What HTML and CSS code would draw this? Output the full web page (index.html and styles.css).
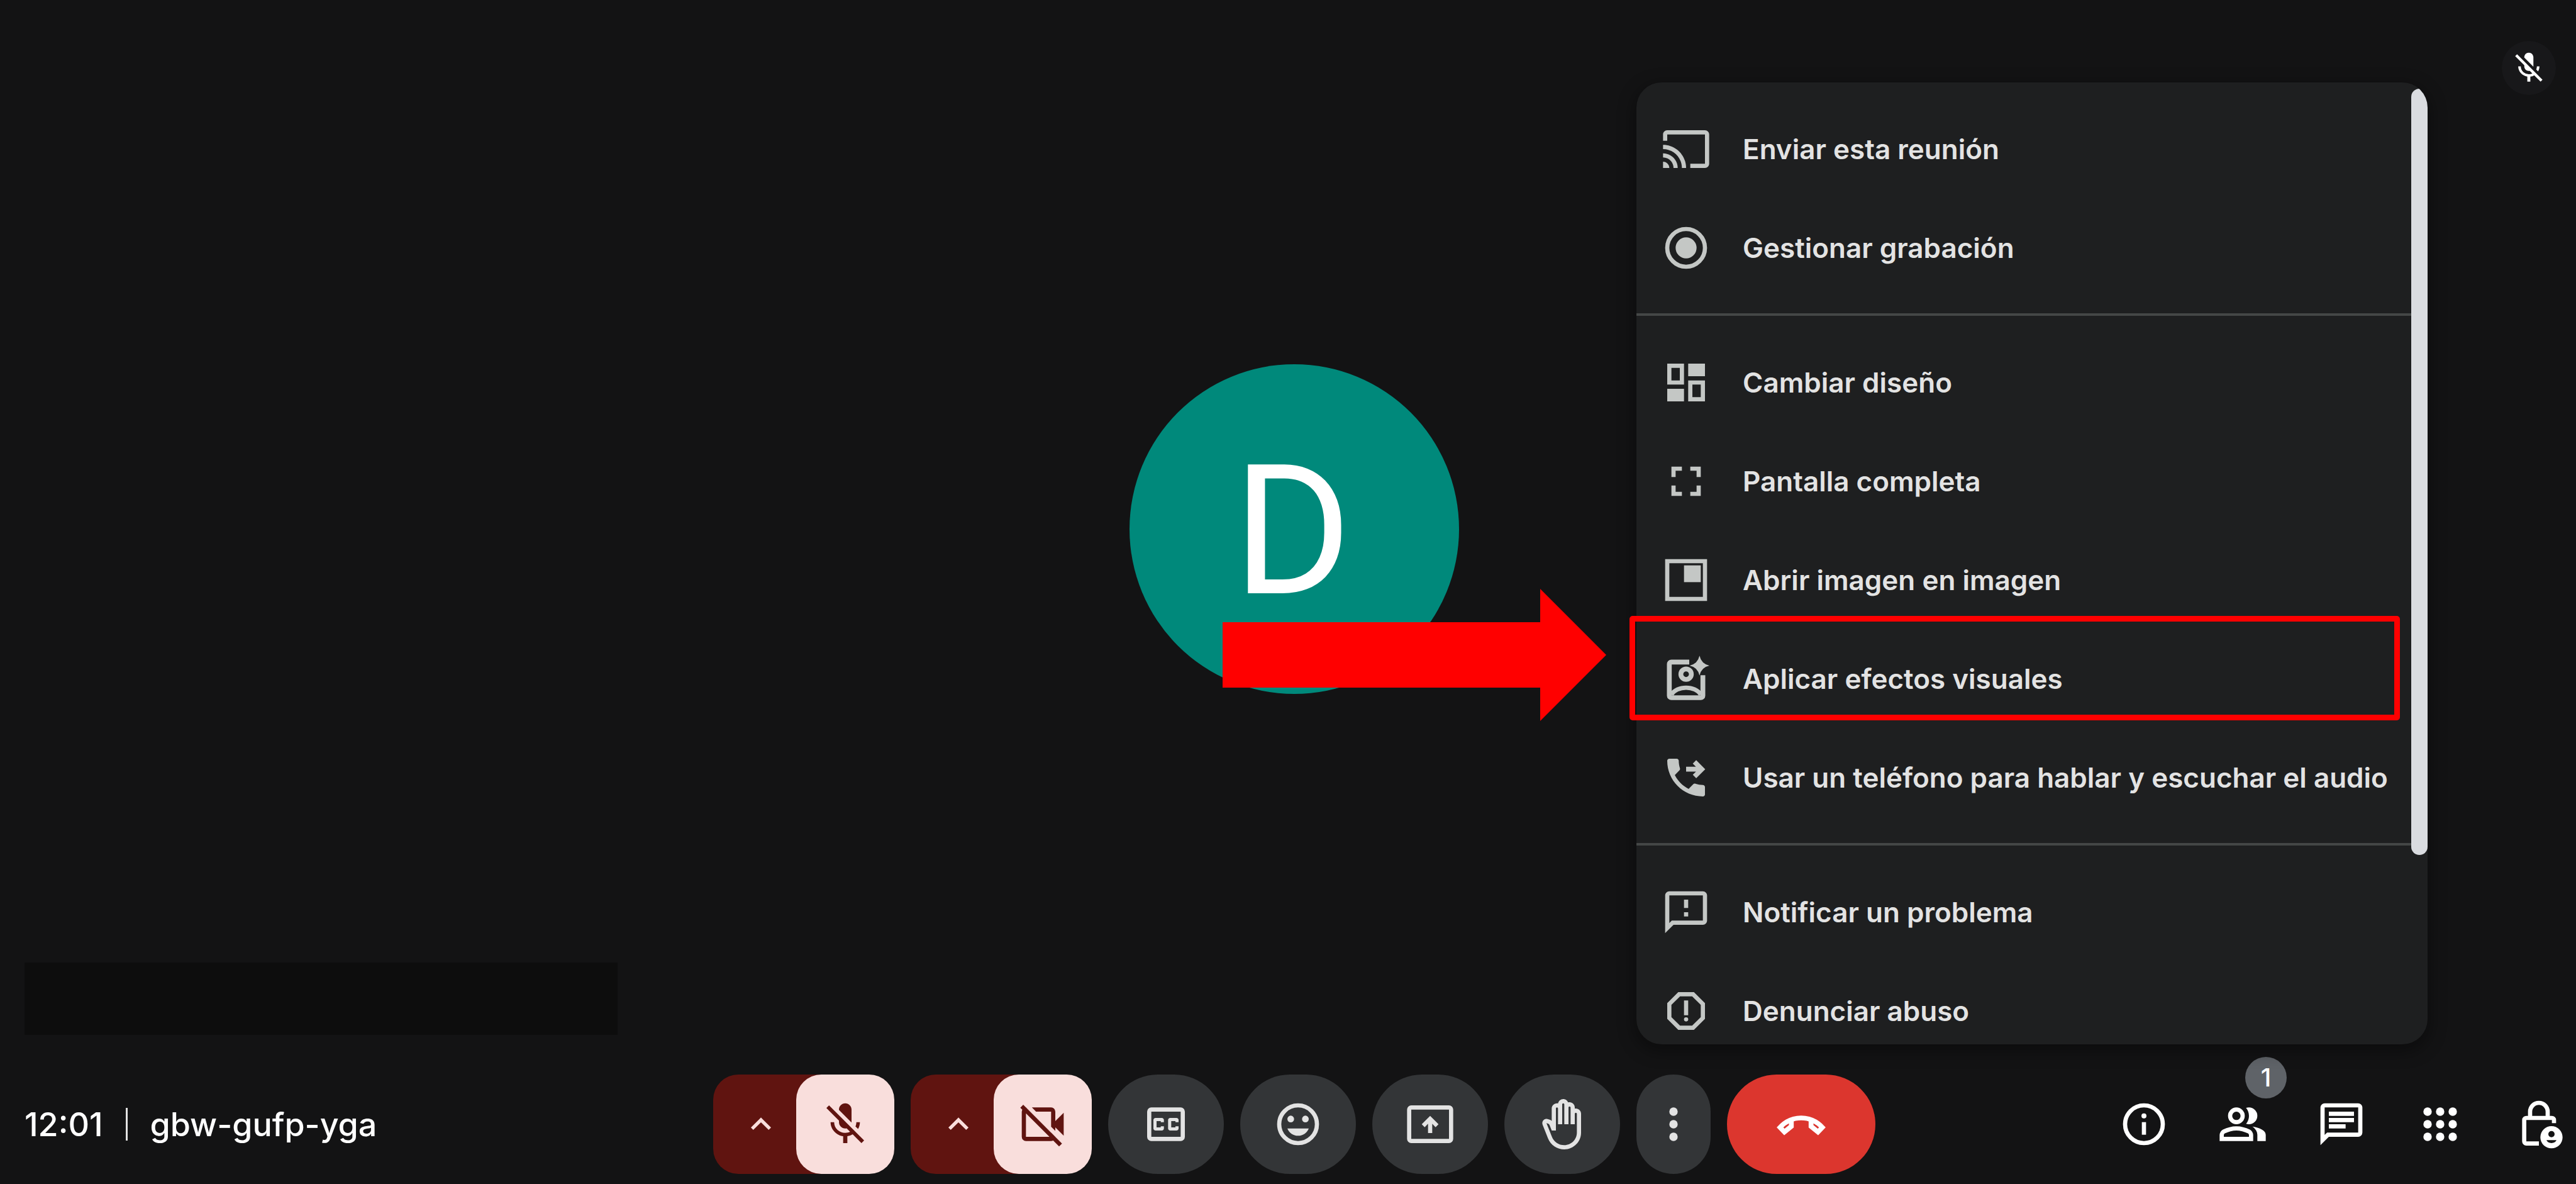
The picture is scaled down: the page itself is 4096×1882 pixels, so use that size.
FILE: index.html
```html
<!DOCTYPE html>
<html lang="es">
<head>
<meta charset="utf-8">
<title>gbw-gufp-yga</title>
<link rel="stylesheet" href="styles.css">
</head>
<body>
<main class="stage">
  <div class="stage-top">
    <span class="muted-pill"><svg class="icon-small" viewBox="0 0 24 24" aria-hidden="true"><path d="M19 11h-1.7c0 .74-.16 1.43-.43 2.05l1.23 1.23c.56-.98.9-2.09.9-3.28zm-4.02.17c0-.06.02-.11.02-.17V5c0-1.66-1.34-3-3-3S9 3.34 9 5v.18l5.98 5.99zM4.27 3L3 4.27l6.01 6.01V11c0 1.66 1.33 3 2.99 3 .22 0 .44-.03.65-.08l1.66 1.66c-.71.33-1.5.52-2.31.52-2.76 0-5.3-2.1-5.3-5.1H5c0 3.41 2.72 6.23 6 6.72V21h2v-3.28c.91-.13 1.77-.45 2.54-.9L19.73 21 21 19.73 4.27 3z"/></svg></span>
  </div>
  <div class="avatar">D</div>
  <div class="name-cover"></div>
</main>

<footer class="bar">
  <div class="meeting">
    <span>12:01</span>
    <span class="separator"></span>
    <span>gbw-gufp-yga</span>
  </div>

  <div class="controls">
    <div class="split">
      <button class="expand" type="button" aria-label="Ajustes de audio"><svg class="icon-chevron" viewBox="0 0 24 24"><path d="M12 8l-6 6 1.41 1.41L12 10.83l4.59 4.58L18 14z"/></svg></button>
      <button class="toggle" type="button" aria-label="Activar micrófono"><svg class="icon" viewBox="0 0 24 24"><path d="M19 11h-1.7c0 .74-.16 1.43-.43 2.05l1.23 1.23c.56-.98.9-2.09.9-3.28zm-4.02.17c0-.06.02-.11.02-.17V5c0-1.66-1.34-3-3-3S9 3.34 9 5v.18l5.98 5.99zM4.27 3L3 4.27l6.01 6.01V11c0 1.66 1.33 3 2.99 3 .22 0 .44-.03.65-.08l1.66 1.66c-.71.33-1.5.52-2.31.52-2.76 0-5.3-2.1-5.3-5.1H5c0 3.41 2.72 6.23 6 6.72V21h2v-3.28c.91-.13 1.77-.45 2.54-.9L19.73 21 21 19.73 4.27 3z"/></svg></button>
    </div>
    <div class="split">
      <button class="expand" type="button" aria-label="Ajustes de vídeo"><svg class="icon-chevron" viewBox="0 0 24 24"><path d="M12 8l-6 6 1.41 1.41L12 10.83l4.59 4.58L18 14z"/></svg></button>
      <button class="toggle" type="button" aria-label="Activar cámara"><svg class="icon" viewBox="0 -960 960 960"><path d="M880-260 720-420v67l-80-80v-287H353l-80-80h367q33 0 56.5 23.5T720-720v180l160-160v440ZM792-56 52-796l56-56L848-112l-56 56ZM160-800l80 80h-80v480h480v-80l80 80q0 33-23.5 56.5T640-160H160q-33 0-56.5-23.5T80-240v-480q0-33 23.5-56.5T160-800Z"/></svg></button>
    </div>
    <button class="round" type="button" aria-label="Subtítulos"><svg class="icon" viewBox="0 -960 960 960"><path d="M200-160q-33 0-56.5-23.5T120-240v-480q0-33 23.5-56.5T200-800h560q33 0 56.5 23.5T840-720v480q0 33-23.5 56.5T760-160H200Zm0-80h560v-480H200v480Zm80-120h120q17 0 28.5-11.5T440-400v-40h-60v20h-80v-120h80v20h60v-40q0-17-11.5-28.5T400-600H280q-17 0-28.5 11.5T240-560v160q0 17 11.5 28.5T280-360Zm400-240H560q-17 0-28.5 11.5T520-560v160q0 17 11.5 28.5T560-360h120q17 0 28.5-11.5T720-400v-40h-60v20h-80v-120h80v20h60v-40q0-17-11.5-28.5T680-600Z"/></svg></button>
    <button class="round" type="button" aria-label="Reacciones"><svg class="icon" viewBox="0 0 24 24"><circle class="line" cx="12" cy="12" r="9"/><circle cx="8.5" cy="9.5" r="1.6"/><circle cx="15.5" cy="9.5" r="1.6"/><path d="M6.9 14h10.2c-.8 2.04-2.78 3.5-5.1 3.5s-4.3-1.46-5.1-3.5z"/></svg></button>
    <button class="round" type="button" aria-label="Presentar ahora"><svg class="icon" viewBox="0 0 24 24"><rect class="line" x="2" y="4" width="20" height="16" rx="1"/><path d="M11 16.2v-4.4l-1.6 1.6L8 12l4-4 4 4-1.4 1.4-1.6-1.6v4.4z"/></svg></button>
    <button class="round" type="button" aria-label="Levantar la mano"><svg class="icon" viewBox="0 0 24 24"><path d="M21 7c0-1.38-1.12-2.5-2.5-2.5-.17 0-.34.02-.5.05V4c0-1.38-1.12-2.5-2.5-2.5-.23 0-.46.03-.67.09C14.46.66 13.56 0 12.5 0c-1.23 0-2.25.89-2.46 2.06C9.87 2.02 9.69 2 9.5 2 8.12 2 7 3.12 7 4.5v5.89c-.34-.31-.76-.54-1.22-.66L5.01 9.52c-.83-.23-1.7.09-2.19.83-.38.57-.4 1.31-.15 1.95l2.56 6.43C6.49 21.91 9.57 24 13 24c4.42 0 8-3.58 8-8V7zm-2 9c0 3.31-2.69 6-6 6-2.61 0-4.95-1.59-5.91-4.01L4.5 11.5l.53.14c.46.12.83.46 1 .9L7 15h2V4.5c0-.28.22-.5.5-.5s.5.22.5.5V12h2V2.5c0-.28.22-.5.5-.5s.5.22.5.5V12h2V4c0-.28.22-.5.5-.5s.5.22.5.5v8h2V7c0-.28.22-.5.5-.5s.5.22.5.5v9z"/></svg></button>
    <button class="round narrow" type="button" aria-label="Más opciones"><svg class="icon" viewBox="0 0 24 24"><circle cx="12" cy="6" r="2"/><circle cx="12" cy="12" r="2"/><circle cx="12" cy="18" r="2"/></svg></button>
    <button class="round hangup" type="button" aria-label="Salir de la llamada"><svg class="icon" viewBox="0 0 24 24"><path class="line heavy" d="M7.3 10.2V13L4 15.7 1.9 13.5C7.5 7.5 16.5 7.5 22.1 13.5L20 15.7 16.7 13v-2.8"/></svg></button>
  </div>

  <div class="panels">
    <button class="panel" type="button" aria-label="Detalles de la reunión"><svg class="icon" viewBox="0 0 24 24"><circle class="line" cx="12" cy="12" r="9"/><circle cx="12" cy="8" r="1.2"/><path d="M11 11h2v6h-2z"/></svg></button>
    <button class="panel" type="button" aria-label="Participantes"><svg class="icon" viewBox="0 -960 960 960"><path d="M40-160v-112q0-34 17.5-62.5T104-378q62-31 126-46.5T360-440q66 0 130 15.5T616-378q29 15 46.5 43.5T680-272v112H40Zm720 0v-120q0-44-24.5-84.5T666-434q51 6 96 20.5t84 35.5q36 20 55 44.5t19 53.5v120H760ZM360-480q-66 0-113-47t-47-113q0-66 47-113t113-47q66 0 113 47t47 113q0 66-47 113t-113 47Zm400-160q0 66-47 113t-113 47q-11 0-28-2.5t-28-5.5q27-32 41.5-71t14.5-81q0-42-14.5-81T544-792q14-5 28-6.5t28-1.5q66 0 113 47t47 113ZM120-240h480v-32q0-11-5.5-20T580-306q-54-27-109-40.5T360-360q-56 0-111 13.5T140-306q-9 5-14.5 14t-5.5 20v32Zm240-320q33 0 56.5-23.5T440-640q0-33-23.5-56.5T360-720q-33 0-56.5 23.5T280-640q0 33 23.5 56.5T360-560Z"/></svg><span class="badge">1</span></button>
    <button class="panel" type="button" aria-label="Chat"><svg class="icon" viewBox="0 -960 960 960"><path d="M240-400h320v-80H240v80Zm0-120h480v-80H240v80Zm0-120h480v-80H240v80ZM80-80v-720q0-33 23.5-56.5T160-880h640q33 0 56.5 23.5T880-800v480q0 33-23.5 56.5T800-240H240L80-80Zm126-240h594v-480H160v525l46-45Z"/></svg></button>
    <button class="panel" type="button" aria-label="Actividades"><svg class="icon" viewBox="0 0 24 24"><circle cx="6" cy="6" r="2"/><circle cx="12" cy="6" r="2"/><circle cx="18" cy="6" r="2"/><circle cx="6" cy="12" r="2"/><circle cx="12" cy="12" r="2"/><circle cx="18" cy="12" r="2"/><circle cx="6" cy="18" r="2"/><circle cx="12" cy="18" r="2"/><circle cx="18" cy="18" r="2"/></svg></button>
    <button class="panel edge" type="button" aria-label="Controles del organizador"><svg class="icon" viewBox="0 0 24 24"><path class="line" d="M7.8 9V6a4.2 4.2 0 0 1 8.4 0v3M19.2 11.5V10a1 1 0 0 0-1-1H6a1 1 0 0 0-1 1v10.2a1 1 0 0 0 1 1h6"/><path fill-rule="evenodd" d="M18 12.9a5.3 5.3 0 1 0 0 10.6 5.3 5.3 0 0 0 0-10.6zm0 2.3a1.5 1.5 0 1 1 0 3 1.5 1.5 0 0 1 0-3zm-2.4 4.4h4.8c-.4.9-1.3 1.4-2.4 1.4s-2-.5-2.4-1.4z"/></svg></button>
  </div>
</footer>

<div class="menu">
  <div class="menu-list" role="menu">
    <button class="item" role="menuitem" type="button"><svg class="icon" viewBox="0 0 24 24"><path d="M21 3H3c-1.1 0-2 .9-2 2v3h2V5h18v14h-7v2h7c1.1 0 2-.9 2-2V5c0-1.1-.9-2-2-2zM1 18v3h3c0-1.66-1.34-3-3-3zm0-4v2c2.76 0 5 2.24 5 5h2c0-3.87-3.13-7-7-7zm0-4v2c4.97 0 9 4.03 9 9h2c0-6.08-4.93-11-11-11z"/></svg>Enviar esta reunión</button>
    <button class="item" role="menuitem" type="button"><svg class="icon" viewBox="0 0 24 24"><circle class="line" cx="12" cy="12" r="9"/><circle cx="12" cy="12" r="5"/></svg>Gestionar grabación</button>
    <hr>
    <button class="item" role="menuitem" type="button"><svg class="icon" viewBox="0 0 24 24"><path d="M13 3h8v6h-8zM3 15h8v6H3z"/><path class="line" d="M4 4h6v8H4zM14 12h6v8h-6z"/></svg>Cambiar diseño</button>
    <button class="item" role="menuitem" type="button"><svg class="icon" viewBox="0 0 24 24"><path d="M7 14H5v5h5v-2H7v-3zm-2-4h2V7h3V5H5v5zm12 7h-3v2h5v-5h-2v3zM14 5v2h3v3h2V5h-5z"/></svg>Pantalla completa</button>
    <button class="item" role="menuitem" type="button"><svg class="icon" viewBox="0 0 24 24"><path class="line" d="M3 3h18v18H3z"/><path d="M11 5h8v8h-8z"/></svg>Abrir imagen en imagen</button>
    <button class="item" role="menuitem" type="button"><svg class="icon" viewBox="0 0 24 24"><path class="line heavy" d="M13.5 4H5a1 1 0 0 0-1 1v15a1 1 0 0 0 1 1h14a1 1 0 0 0 1-1v-9.7"/><circle class="line heavy" cx="12" cy="9.8" r="2.5"/><path class="line" d="M5 19.6C7.5 15.1 16.5 15.1 19 19.6"/><path d="M18.4 1q.9 3.9 4.7 4.7-3.8.8-4.7 4.7-.9-3.9-4.7-4.7 3.8-.8 4.7-4.7z"/></svg>Aplicar efectos visuales</button>
    <button class="item" role="menuitem" type="button"><svg class="icon" viewBox="0 0 24 24"><path d="M20 15.5c-1.25 0-2.45-.2-3.57-.57-.35-.11-.74-.03-1.02.24l-2.2 2.2c-2.83-1.44-5.15-3.75-6.59-6.59l2.2-2.21c.28-.26.36-.65.25-1C8.7 6.45 8.5 5.25 8.5 4c0-.55-.45-1-1-1H4c-.55 0-1 .45-1 1 0 9.39 7.61 17 17 17 .55 0 1-.45 1-1v-3.5c0-.55-.45-1-1-1z"/><path class="line heavy" d="M12 8h7.5M16 4.5 19.5 8 16 11.5"/></svg>Usar un teléfono para hablar y escuchar el audio</button>
    <hr>
    <button class="item" role="menuitem" type="button"><svg class="icon" viewBox="0 0 24 24"><path d="M20 2H4c-1.1 0-1.99.9-1.99 2L2 22l4-4h14c1.1 0 2-.9 2-2V4c0-1.1-.9-2-2-2zm0 14H5.17l-.59.59-.58.58V4h16v12zm-9-4h2v2h-2zm0-6h2v4h-2z"/></svg>Notificar un problema</button>
    <button class="item" role="menuitem" type="button"><svg class="icon" viewBox="0 0 24 24"><path d="M15.73 3H8.27L3 8.27v7.46L8.27 21h7.46L21 15.73V8.27L15.73 3zM19 14.9L14.9 19H9.1L5 14.9V9.1L9.1 5h5.8L19 9.1v5.8zM11 7h2v7h-2z"/><circle cx="12" cy="16" r="1"/></svg>Denunciar abuso</button>
  </div>
  <div class="scroll-thumb"></div>
</div>

<svg class="arrow" viewBox="0 0 610 210" aria-hidden="true"><path d="M0 53h505V0l105 105-105 105v-53H0z"/></svg>
<div class="highlight"></div>
</body>
</html>
```
FILE: styles.css
```css
* { box-sizing: border-box; }

body {
  position: relative;
  display: flex;
  flex-direction: column;
  min-height: 100vh;
  margin: 0;
  padding-left: 20px;
  overflow: hidden;
  background: #131314;
  color: #fff;
  font-family: Inter, "Liberation Sans", sans-serif;
  font-weight: 500;
}

button {
  display: flex;
  align-items: center;
  justify-content: center;
  margin: 0;
  padding: 0;
  border: 0;
  background: none;
  color: inherit;
  font: inherit;
}

svg { fill: currentColor; }
.line { fill: none; stroke: currentColor; stroke-width: 2; }
.heavy { stroke-width: 2.3; }
.icon { flex: none; width: 80px; height: 80px; }
.icon-small { width: 58px; height: 58px; }
.icon-chevron { width: 64px; height: 64px; }

/* Stage */
.stage {
  flex: 1;
  display: grid;
  grid-template-rows: 1fr auto 1fr;
  padding: 37px 19px 47px;
}
.stage-top {
  display: flex;
  justify-content: flex-end;
  align-items: flex-start;
  padding: 28px 13px 0 0;
}
.muted-pill {
  display: flex;
  align-items: center;
  justify-content: center;
  width: 86px;
  height: 86px;
  border-radius: 50%;
  background: #18181a;
}
.avatar {
  display: flex;
  align-items: center;
  justify-content: center;
  justify-self: center;
  width: 524px;
  height: 524px;
  padding: 8px 6px 0 0;
  border-radius: 50%;
  background: #00897b;
  font-family: Roboto, "Liberation Sans", sans-serif;
  font-size: 288px;
  font-weight: 400;
  line-height: 1;
}
.name-cover {
  align-self: end;
  width: 943px;
  height: 115px;
  background: #0d0d0d;
}

/* Bottom bar */
.bar {
  display: grid;
  grid-template-columns: 1fr auto 1fr;
  align-items: center;
  padding: 16px 0;
}
.meeting {
  display: flex;
  align-items: center;
  gap: 36px;
  padding-left: 19px;
  font-size: 52px;
}
.separator { width: 3px; height: 52px; background: #e3e3e3; }
.controls { display: flex; gap: 26px; }
.split { display: flex; }
.expand {
  width: 172px;
  height: 158px;
  padding-right: 20px;
  border-radius: 40px 0 0 40px;
  background: #601410;
  color: #f9dedc;
}
.toggle {
  width: 156px;
  height: 158px;
  margin-left: -40px;
  border-radius: 40px;
  background: #f9dedc;
  color: #601410;
}
.round {
  width: 184px;
  height: 158px;
  border-radius: 79px;
  background: #333537;
  color: #e3e3e3;
}
.narrow { width: 118px; }
.hangup { width: 236px; background: #dc362e; color: #fff; }
.panels { display: flex; justify-content: flex-end; }
.panel { position: relative; width: 157px; height: 158px; }
.edge { width: 138px; padding-left: 20px; }
.badge {
  position: absolute;
  top: -28px;
  right: 8px;
  width: 66px;
  height: 66px;
  border-radius: 50%;
  background: #5f6368;
  font-size: 40px;
  line-height: 66px;
}

/* Options menu */
.menu {
  position: absolute;
  top: 131px;
  right: 236px;
  bottom: 222px;
  display: flex;
  width: 1258px;
  overflow: hidden;
  border-radius: 40px;
  background: #1e1f20;
  box-shadow: 0 8px 26px 4px rgba(0, 0, 0, 0.35);
}
.menu-list { flex: 1; padding-top: 27px; }
.item {
  justify-content: flex-start;
  gap: 50px;
  width: 100%;
  height: 157px;
  padding-left: 39px;
  color: #e3e3e3;
  font-size: 44px;
  font-weight: 600;
  white-space: nowrap;
}
.item .icon { color: #c4c7c5; }
.menu hr {
  height: 4px;
  margin: 26px 0 27px;
  border: 0;
  background: #444746;
}
.scroll-thumb {
  width: 26px;
  height: 1218px;
  margin-top: 10px;
  border-radius: 13px;
  background: #dadce0;
}

/* Callout drawn over the call */
.arrow {
  position: absolute;
  top: 936px;
  left: 1944px;
  width: 610px;
  height: 210px;
  fill: #f00;
}
.highlight {
  position: absolute;
  top: 979px;
  right: 280px;
  width: 1225px;
  height: 166px;
  border: 9px solid #f00;
  border-radius: 5px;
}
```
